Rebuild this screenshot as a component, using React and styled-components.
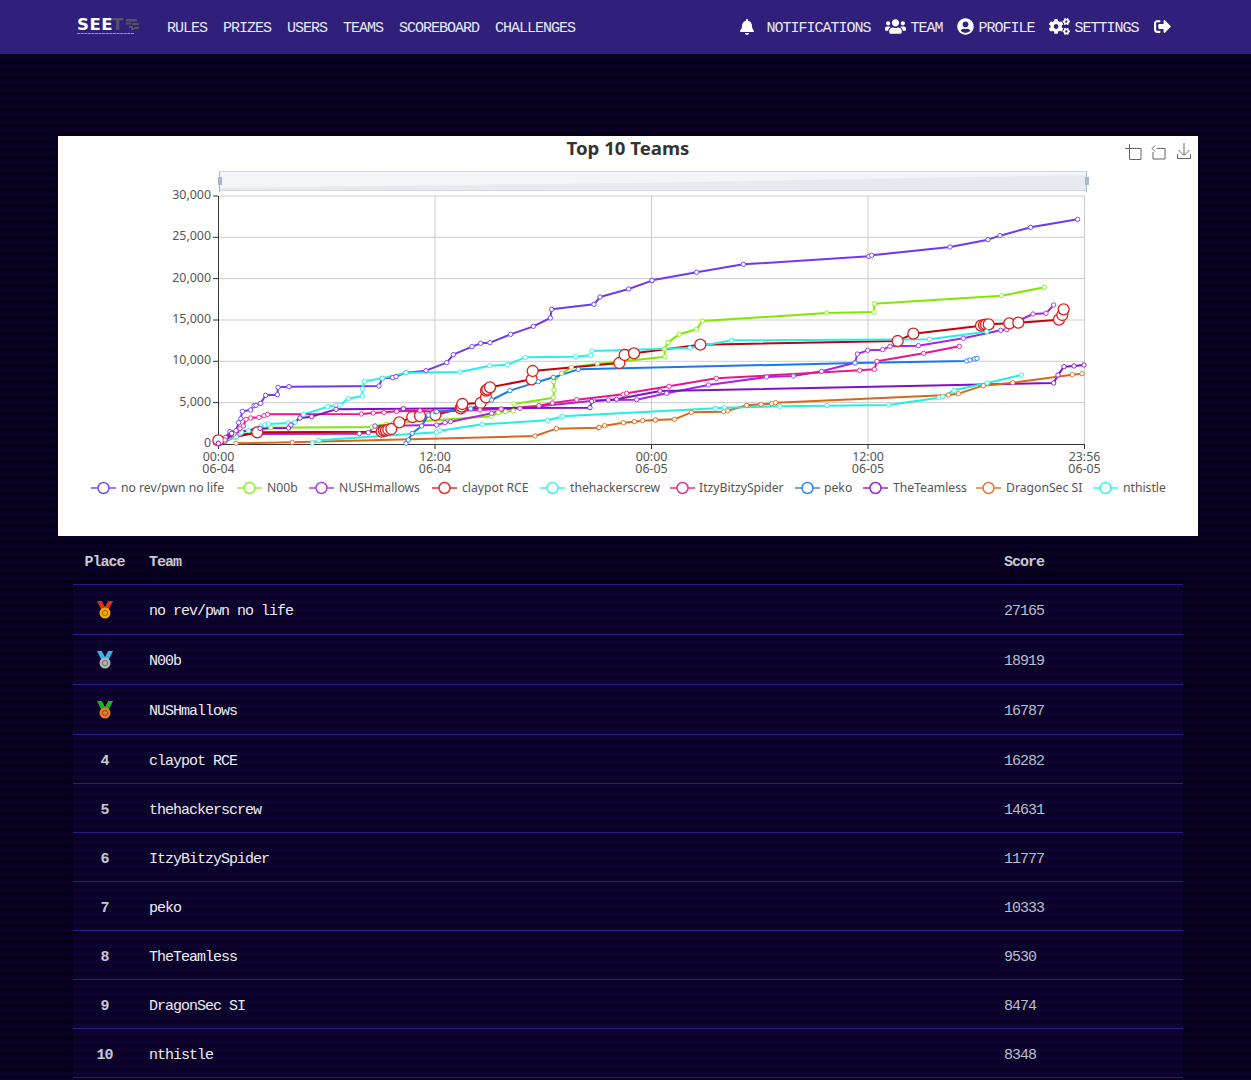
import React from "react";
import styled, { createGlobalStyle } from "styled-components";
import { FaBell, FaUsers, FaUserCircle, FaCogs, FaSignOutAlt } from "react-icons/fa";

const Global = createGlobalStyle`
  html, body { margin: 0; padding: 0; }
  body {
    background: repeating-linear-gradient(180deg, #0a0226 0, #0a0226 4px, #060019 4px, #060019 8px);
    font-family: "Liberation Mono", "DejaVu Sans Mono", monospace;
    overflow: hidden;
  }
`;
const Nav = styled.nav`
  height: 54px; background: #31207b; display: flex; align-items: center;
  padding: 0 73px 0 77px; color: #e6e8f2; font-size: 15px; letter-spacing: -1px;
`;
const Logo = styled.svg` width: 62px; height: 20px; margin: -1px 20px 0 0; flex: none; overflow: visible; `;
const Links = styled.div` display: flex; padding-top: 2px; `;
const Link = styled.a` padding: 0 8px; white-space: nowrap; `;
const Right = styled.div` margin-left: auto; display: flex; align-items: center; `;
const Item = styled.a`
  display: flex; align-items: center; gap: ${p => p.$gap}px; padding: 0 7.5px; white-space: nowrap;
  span { padding-top: 2px; }
  svg { color: #fff; font-size: ${p => p.$icon}px; flex: none; margin-top: -1px; }
`;
const WideIcon = styled.span`
  display: flex; padding: 0 !important;
  svg { width: 21px; height: 17px; }
`;
const Main = styled.main` width: 1140px; margin: 82px 0 0 58px; `;
const ChartCard = styled.section` height: 400px; background: #fff; `;
const ChartSvg = styled.svg`
  display: block; width: 1140px; height: 400px;
  font-family: "Noto Sans", "Liberation Sans", Arial, sans-serif;
`;
const Table = styled.div` margin: 0 15px; color: #e8ecf6; font-size: 15px; letter-spacing: -1px; `;
const Row = styled.div`
  display: grid; grid-template-columns: 64px 855px 191px; align-items: center; box-sizing: border-box;
  height: ${p => p.$h}px; border-bottom: 1px solid #2a1a86;
  background: ${p => (p.$head ? "transparent" : "rgba(40,16,110,.16)")};
`;
const Place = styled.div` font-weight: 700; color: #c3c8d4; display: flex; justify-content: center; padding: 4px 1px 0 0; `;
const HeadCell = styled.div`
  font-weight: 700; color: #c6c9d2; padding-left: ${p => p.$pl}px; padding-top: 5px;
  padding-right: ${p => (p.$c ? 1 : 0)}px; text-align: ${p => (p.$c ? "center" : "left")};
`;
const Team = styled.div` padding: 4px 0 0 12px; `;
const Score = styled.div` padding: 4px 0 0 12px; color: #b8beca; `;
const MedalSvg = styled.svg` width: 18px; height: 20px; display: block; margin-top: -3px; `;

const teams = [
  ["no rev/pwn no life", 27165], ["N00b", 18919], ["NUSHmallows", 16787], ["claypot RCE", 16282],
  ["thehackerscrew", 14631], ["ItzyBitzySpider", 11777], ["peko", 10333], ["TheTeamless", 9530],
  ["DragonSec SI", 8474], ["nthistle", 8348],
];
const medals = [
  ["#d8301c", "#f0a808", "#a86c00"],
  ["#38b0f0", "#b0b0b0", "#707070"],
  ["#20b020", "#e87830", "#a04c10"],
];

const z3 = a => a.map(([x, y]) => [160 + x / 3, 180 + y / 3]);
const z4 = a => a.map(([x, y]) => [640 + x / 3, 180 + y / 3]);

const series = [
  { name: "no rev/pwn no life", color: "#7038f0", leg: "#7a4cf5", lx: 91, tx: 121, pts: [...z3([[175,785],[197,772],[210,755],[228,752],[236,728],[242,716],[247,694],[272,690],[282,677],[288,676],[302,670],[317,646],[352,644],[354,622],[387,620],[657,618],[667,595],[698,593],[708,590],[738,578],[798,572],[860,548],[880,524],[936,500],[962,490],[990,488],[1052,463],[1120,439],[1171,414],[1175,388],[1302,373],[1320,351],[1406,327],[1476,302]]), ...z4([[36,301],[170,277],[310,253],[687,229],[695,226],[930,201],[1044,179],[1080,167],[1172,142],[1313,118]])] },
  { name: "N00b", color: "#80e800", leg: "#90ee30", lx: 237, tx: 267, pts: [...z3([[175,790],[228,772],[332,743],[635,741],[645,738],[678,733],[700,730],[995,709],[1015,697],[1037,695],[1060,693],[1062,672],[1180,653],[1182,630],[1181,605],[1205,580],[1234,562],[1312,551],[1378,545]]), ...z4([[75,530],[73,507],[84,487],[118,463],[170,448],[187,423],[560,399],[702,396],[703,371],[1085,347],[1213,322]])] },
  { name: "NUSHmallows", color: "#a428e0", leg: "#b040e0", lx: 309, tx: 339, pts: [...z3([[175,790],[195,785],[240,762],[598,761],[625,758],[645,738],[830,735],[855,728],[872,725],[995,700],[1025,688],[1080,685],[1300,662],[1345,660],[1430,659]]), ...z4([[80,640],[205,615],[380,591],[460,588],[545,574],[645,548],[652,522],[683,511],[728,509],[750,499],[835,497],[970,475],[1082,451],[1100,449],[1140,420],[1179,402],[1218,400],[1241,375]])] },
  { name: "claypot RCE", color: "#c40008", leg: "#e03030", lx: 432, tx: 462, big: true, pts: [...z3([[175,781],[292,757],[665,755],[672,752],[678,751],[685,749],[694,747],[718,727],[757,711],[780,708],[826,705],[902,685],[905,680],[907,672],[962,669],[978,652],[978,632],[982,628],[990,622],[1115,598],[1118,573],[1378,549],[1394,525],[1422,520]]), ...z4([[181,494],[773,483],[820,461],[1023,437],[1032,435],[1038,434],[1046,433],[1108,430],[1135,428],[1257,419],[1267,405],[1271,388]])] },
  { name: "thehackerscrew", color: "#28f0e8", leg: "#40f0f0", lx: 540, tx: 570, pts: [...z3([[175,790],[228,770],[245,757],[265,752],[302,738],[315,735],[325,732],[385,729],[405,727],[420,713],[431,703],[503,680],[528,676],[540,675],[565,656],[607,648],[607,627],[613,604],[667,595],[738,578],[900,576],[989,557],[1042,554],[1096,532],[1247,530],[1292,526],[1296,513]]), ...z4([[150,504],[275,481],[868,478],[1040,455]])] },
  { name: "ItzyBitzySpider", color: "#e81490", leg: "#e83098", lx: 670, tx: 699, pts: [...z3([[175,790],[195,780],[222,762],[240,745],[250,738],[258,718],[272,714],[297,712],[312,707],[323,703],[604,702],[640,699],[672,697],[710,694],[780,692],[826,695],[960,690],[1023,687],[1137,677],[1177,669],[1250,659],[1390,643],[1400,640]]), ...z4([[87,619],[229,595],[659,571],[703,568],[711,544],[851,520],[958,499]])] },
  { name: "peko", color: "#1878f0", leg: "#3088f0", lx: 795, tx: 824, pts: [...z3([[738,790],[745,780],[757,760],[785,738],[805,705],[830,695],[932,686],[995,660],[1050,632],[1135,605],[1180,592],[1255,568]]), ...z4([[645,549],[980,543],[990,540],[1003,537],[1011,535]])] },
  { name: "TheTeamless", color: "#8010c8", leg: "#8c28d0", lx: 863, tx: 893, pts: [...z3([[175,790],[215,760],[300,745],[386,744],[393,735],[420,714],[455,710],[528,688],[730,686],[1290,683],[1295,664],[1370,658]]), ...z4([[60,633],[1241,609],[1254,585],[1272,560],[1302,558],[1332,555]])] },
  { name: "DragonSec SI", color: "#d86818", leg: "#e07830", lx: 976, tx: 1006, pts: [...z3([[228,790],[397,787],[1125,768],[1189,746],[1315,743],[1317,742],[1334,737],[1390,728],[1423,725],[1448,722],[1487,720]]), ...z4([[46,720],[103,718],[154,697],[251,695],[263,692],[320,676],[363,673],[395,671],[407,668],[925,645],[955,641],[1030,617],[1118,608],[1297,584],[1326,581]])] },
  { name: "nthistle", color: "#20f0e0", leg: "#40f0e8", lx: 1093, tx: 1123, pts: [...z3([[457,789],[477,781],[830,757],[840,752],[967,733],[1163,721],[1203,711],[1208,709]]), ...z4([[226,685],[253,683],[420,679],[561,677],[746,675],[897,653],[908,650],[942,631],[1042,609],[1144,585]])] },
];

const yTicks = [[30000, 196], [25000, 237.3], [20000, 278.6], [15000, 320], [10000, 361.3], [5000, 402.6], [0, 444]];
const xTicks = [[218.5, "00:00", "06-04"], [435, "12:00", "06-04"], [651.5, "00:00", "06-05"], [868, "12:00", "06-05"], [1084.5, "23:56", "06-05"]];

function Chart() {
  return (
    <ChartSvg viewBox="58 136 1140 400">
      <text x="628" y="155" textAnchor="middle" fontSize="18.600" fontWeight="700" fill="#333">Top 10 Teams</text>

      <g fill="none" stroke="#666" strokeWidth="1">
        <path d="M1125 148.5h16M1129.5 144v15.5h11.5v-11" />
        <path d="M1156.5 148.5h8.5v10.5h-12v-7M1152 148.5l3-3M1152 148.5l3 3" />
        <path d="M1184 143v12M1178.5 150l5.5 5.5 5.5-5.5M1177.5 154v4.5h13v-4.5" />
      </g>

      <rect x="219.5" y="171.5" width="867" height="19" fill="#f3f5f8" stroke="#d4d8de" />
      <path d="M220 188L640 183L1086 175V190H220Z" fill="#e6e9ed" />
      <path d="M219.5 171v21M1086.5 171v21" stroke="#a8b8d0" fill="none" />
      <rect x="218" y="177" width="4" height="8" fill="#a8b8d0" />
      <rect x="1085" y="177" width="4" height="8" fill="#a8b8d0" />

      <g stroke="#ccc" fill="none">
        {yTicks.slice(0, 6).map(([v, y]) => <path key={v} d={`M219 ${y}H1085`} />)}
        {xTicks.slice(1).map(([x]) => <path key={x} d={`M${x} 196V444`} />)}
      </g>
      <g stroke="#333" fill="none">
        <path d="M218.5 196V444.5M218 444.5H1085" />
        {yTicks.map(([v, y]) => <path key={v} d={`M213 ${y}H218`} stroke="#333" />)}
        {xTicks.map(([x]) => <path key={x} d={`M${x} 444V449`} />)}
      </g>
      <g fontSize="12.400" fill="#555" textAnchor="end">
        {yTicks.map(([v, y]) => <text key={v} x="211" y={y + 3}>{v.toLocaleString("en-US")}</text>)}
      </g>
      <g fontSize="12.400" fill="#555" textAnchor="middle">
        {xTicks.map(([x, t, d]) => (
          <g key={x}>
            <text x={x} y="461">{t}</text>
            <text x={x} y="472.500">{d}</text>
          </g>
        ))}
      </g>

      {series.map(s => (
        <polyline key={s.name} points={s.pts.map(p => p.join(",")).join(" ")} fill="none" stroke={s.color} strokeWidth="2" strokeLinejoin="round" />
      ))}
      {series.map(s => (
        <g key={s.name}>
          {s.pts.map(([x, y], i) => (
            <circle key={i} cx={x} cy={y} r={s.big ? 5.5 : 2.2} fill="#fff" stroke={s.big ? "#d82020" : s.leg} strokeWidth={s.big ? 1.3 : 1} />
          ))}
        </g>
      ))}

      {series.map(s => (
        <g key={s.name}>
          <path d={`M${s.lx} 488h25`} stroke={s.leg} strokeWidth="1.5" />
          <circle cx={s.lx + 12.5} cy="488" r="5.5" fill="#fff" stroke={s.leg} strokeWidth="1.5" />
          <text x={s.tx} y="492" fontSize="12.200" fill="#555">{s.name}</text>
        </g>
      ))}
    </ChartSvg>
  );
}

function Medal({ c }) {
  return (
    <MedalSvg viewBox="0 0 18 20">
      <path d="M1 1h5l3 6 3-6h5l-5 10h-6z" fill={c[0]} />
      <path d="M6 1h6l-3 5z" fill="#0a0226" />
      <circle cx="9" cy="13" r="5.500" fill={c[1]} />
      <circle cx="9" cy="13" r="2.600" fill="none" stroke={c[2]} strokeWidth="1" />
    </MedalSvg>
  );
}

export default function App() {
  return (
    <>
      <Global />
      <Nav>
        <Logo viewBox="0 0 62 20">
          <text x="0" y="13" fontFamily="'DejaVu Sans', sans-serif" fontWeight="700" fontSize="16.500" letterSpacing="0.500" fill="#fff">SEE</text>
          <text x="35" y="13" fontFamily="'DejaVu Sans', sans-serif" fontWeight="700" fontSize="16.500" fill="#56525f">T</text>
          <path d="M49 2h11v2.500h-11zM49 5.500h5v2h-5zM55 6h7v2h-7zM52 9h4v2h-4zM57 10h5v2h-5zM54 11h3v2h-3z" fill="#56525f" />
          <path d="M0 16.500h57" stroke="#9a96b8" strokeWidth="1.200" strokeDasharray="3 .6" />
        </Logo>
        <Links>
          {["RULES", "PRIZES", "USERS", "TEAMS", "SCOREBOARD", "CHALLENGES"].map(t => (
            <Link key={t}>{t}</Link>
          ))}
        </Links>
        <Right>
          <Item $gap={11} $icon={16}><FaBell /><span>NOTIFICATIONS</span></Item>
          <Item $gap={4} $icon={18}><WideIcon><FaUsers /></WideIcon><span>TEAM</span></Item>
          <Item $gap={4} $icon={17}><FaUserCircle /><span>PROFILE</span></Item>
          <Item $gap={4} $icon={18}><WideIcon><FaCogs /></WideIcon><span>SETTINGS</span></Item>
          <Item $gap={0} $icon={17}><FaSignOutAlt /></Item>
        </Right>
      </Nav>
      <Main>
        <ChartCard><Chart /></ChartCard>
        <Table>
          <Row $h={49} $head>
            <HeadCell $c>Place</HeadCell>
            <HeadCell $pl={12}>Team</HeadCell>
            <HeadCell $pl={12}>Score</HeadCell>
          </Row>
          {teams.map(([name, score], i) => (
            <Row key={name} $h={i < 3 ? 50 : 49}>
              <Place>{i < 3 ? <Medal c={medals[i]} /> : i + 1}</Place>
              <Team>{name}</Team>
              <Score>{score}</Score>
            </Row>
          ))}
        </Table>
      </Main>
    </>
  );
}
